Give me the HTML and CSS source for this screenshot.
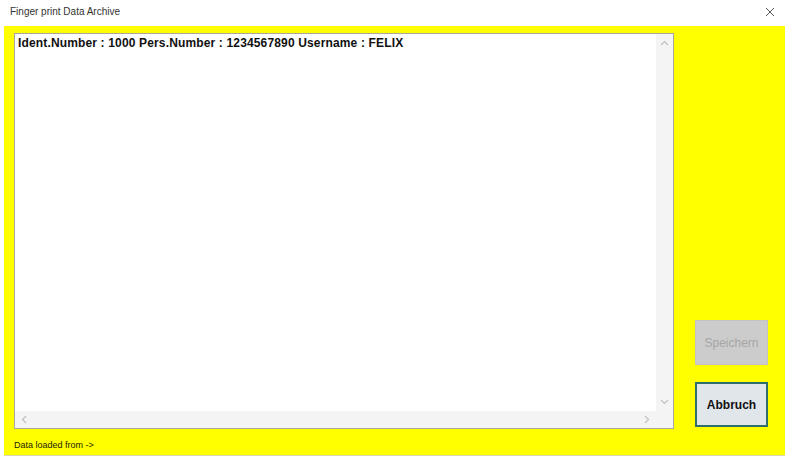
FILE: index.html
```html
<!DOCTYPE html>
<html>
<head>
<meta charset="utf-8">
<link rel="stylesheet" href="styles.css">
</head>
<body>
<div class="window">
  <div class="titlebar">
    <span class="title">Finger print Data Archive</span>
    <svg class="close" width="10" height="10" viewBox="0 0 10 10"><path d="M1 1 L9 9 M9 1 L1 9" stroke="#555" stroke-width="1"/></svg>
  </div>
  <div class="client">
    <div class="main">
      <div class="textbox">
        <div class="content">Ident.Number : 1000 Pers.Number : 1234567890 Username : FELIX</div>
        <div class="vscroll">
          <svg width="9" height="6" viewBox="0 0 9 6"><path d="M1 5 L4.5 1.5 L8 5" fill="none" stroke="#c0c0c0" stroke-width="1.2"/></svg>
          <svg width="9" height="6" viewBox="0 0 9 6"><path d="M1 1 L4.5 4.5 L8 1" fill="none" stroke="#c0c0c0" stroke-width="1.2"/></svg>
        </div>
        <div class="hscroll">
          <svg width="6" height="9" viewBox="0 0 6 9"><path d="M5 1 L1.5 4.5 L5 8" fill="none" stroke="#c0c0c0" stroke-width="1.2"/></svg>
          <svg width="6" height="9" viewBox="0 0 6 9"><path d="M1 1 L4.5 4.5 L1 8" fill="none" stroke="#c0c0c0" stroke-width="1.2"/></svg>
        </div>
        <div class="corner"></div>
      </div>
      <div class="buttons">
        <button class="btn disabled">Speichern</button>
        <button class="btn primary">Abbruch</button>
      </div>
    </div>
    <div class="status">Data loaded from -&gt;</div>
  </div>
</div>
</body>
</html>
```
FILE: styles.css
```css
html, body {
  margin: 0;
  padding: 0;
  background: #ffffff;
  font-family: "Liberation Sans", Arial, sans-serif;
}
.window {
  width: 785px;
  height: 459px;
  display: flex;
  flex-direction: column;
}
.titlebar {
  height: 26px;
  display: flex;
  align-items: center;
  justify-content: space-between;
  padding: 0 10px 0 10px;
  box-sizing: border-box;
}
.title {
  font-size: 10px;
  color: #333333;
  margin-top: -4px;
}
.close {
  margin-top: -3px;
}
.client {
  margin-left: 4px;
  height: 430px;
  background: #ffff00;
  box-sizing: border-box;
  padding: 7px 0 0 10px;
  display: flex;
  flex-direction: column;
  border-bottom: 1px solid #d8d8b0;
}
.main {
  display: flex;
  gap: 21px;
}
.textbox {
  width: 660px;
  height: 396px;
  box-sizing: border-box;
  border: 1px solid #a8a8a0;
  background: #ffffff;
  display: grid;
  grid-template-columns: 1fr 17px;
  grid-template-rows: 1fr 17px;
}
.content {
  font-size: 12px;
  font-weight: bold;
  letter-spacing: 0.15px;
  color: #111111;
  padding: 2px 0 0 3px;
  white-space: nowrap;
}
.vscroll {
  background: #f4f4f4;
  display: flex;
  flex-direction: column;
  justify-content: space-between;
  align-items: center;
  padding: 6px 0 6px;
}
.hscroll {
  background: #f4f4f4;
  display: flex;
  justify-content: space-between;
  align-items: center;
  padding: 0 6px;
}
.corner {
  background: #f4f4f4;
}
.buttons {
  display: flex;
  flex-direction: column;
  justify-content: flex-end;
  gap: 17px;
  padding-bottom: 2px;
}
.btn {
  width: 73px;
  height: 45px;
  font-family: "Liberation Sans", Arial, sans-serif;
  font-size: 12px;
  padding: 0;
  box-sizing: border-box;
}
.disabled {
  background: #cccccc;
  color: #a6a6a6;
  border: 1px solid #c4c4c4;
}
.primary {
  background: #e1e6ea;
  color: #111111;
  font-weight: bold;
  border: 2px solid #2f6e6a;
}
.status {
  font-size: 9px;
  color: #222200;
  margin-top: 11px;
}
```
